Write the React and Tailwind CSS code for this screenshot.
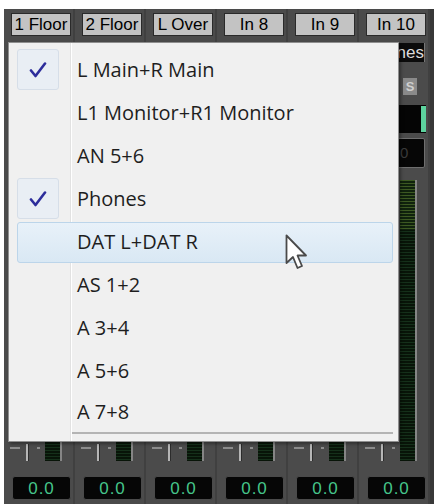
import React from 'react';

const strips = [
  { name: '1 Floor' },
  { name: '2 Floor' },
  { name: 'L Over' },
  { name: 'In 8' },
  { name: 'In 9' },
  { name: 'In 10', label: 'Phones', visible: true },
];

const outputs = [
  { name: 'L Main+R Main', checked: true },
  { name: 'L1 Monitor+R1 Monitor' },
  { name: 'AN 5+6' },
  { name: 'Phones', checked: true },
  { name: 'DAT L+DAT R', hover: true },
  { name: 'AS 1+2' },
  { name: 'A 3+4' },
  { name: 'A 5+6' },
  { name: 'A 7+8', last: true },
];

// the menu covers most of each strip, only the last one shows its upper controls
const Strip = ({ name, label, visible }) => {
  return (
    <div className="w-[71px] shrink-0 flex flex-col border-r-2 border-[#404040]">
      <div className="mt-[4px] ml-[7px] w-[60px] h-[23px] bg-[#c3c3c3] border border-[#2a2a2a] flex items-center justify-center whitespace-nowrap overflow-hidden text-[17px] leading-none text-black">
        {name}
      </div>
      <div className="mt-[7px] ml-[7px] w-[59px] h-[19px] bg-[#0b0b0b] border-r border-[#777] flex items-center justify-end overflow-hidden whitespace-nowrap text-[17px] leading-none text-[#dcdcdc]">
        {label}
      </div>
      <div className="mt-[16px] h-[17px] flex">
        <div className="ml-[10px] w-[14px] bg-[#8a8a8a]" />
        <div className="ml-[20px] w-[14px] bg-[#8a8a8a] text-[#cfcfcf] text-[13px] font-bold flex items-center justify-center">
          {visible ? 'S' : ''}
        </div>
      </div>
      <div className="mt-[10px] ml-[7px] w-[60px] h-[28px] bg-[#050505] flex justify-end">
        <div className="w-[5px] my-[1px] bg-[#5dd39e]" />
      </div>
      <div className="mt-[5px] ml-[7px] w-[59px] h-[30px] bg-[#060606] border border-[#6e6e6e] rounded-[2px] flex items-center pl-[33px] text-[15px] text-[#3a3a3a]">
        {visible ? '0' : ''}
      </div>
      <div className="mt-[12px] h-[281px] flex">
        <div className="w-[41px] flex flex-col justify-end">
          <div className="h-[17px] flex items-start">
            <div className="ml-[6px] mt-[3px] w-[10px] h-[2px] bg-[#8c8c8c]" />
            <div className="ml-[6px] w-[3px] h-[17px] bg-[#b5b5b5] border-r border-[#2c2c2c]" />
            <div className="ml-[8px] mt-[3px] w-[3px] h-[2px] bg-[#8c8c8c]" />
          </div>
        </div>
        <div className="w-[17px] h-full border-r-2 border-[#858585] bg-[image:repeating-linear-gradient(to_bottom,#15301a_0px,#15301a_1px,#081408_1px,#081408_3px)]">
          <div className="h-[50px] bg-[image:repeating-linear-gradient(to_bottom,#3d5a22_0px,#3d5a22_1px,#10220d_1px,#10220d_3px)]" />
        </div>
      </div>
      <div className="mt-[15px] ml-[8px] w-[59px] h-[24px] bg-[#060606] border border-[#4a4a4a] rounded-[3px] flex items-center justify-center text-[17px] leading-none tracking-[1px] text-[#45c48a]">
        0.0
      </div>
    </div>
  );
};

const Check = () => (
  <div className="absolute left-[8px] top-[1px] w-[42px] h-[41px] rounded-[3px] border border-[#d6dee8] bg-[#e9eef4] flex items-center justify-center">
    <svg width="18" height="16" viewBox="0 0 18 16">
      <path d="M2 8.5 L6.5 14 L16 1.5" fill="none" stroke="#2d2d9b" strokeWidth="2.6" strokeLinejoin="round" strokeLinecap="round" />
    </svg>
  </div>
);

const App = () => {
  return (
    <div className="relative w-[434px] h-[504px] bg-white pt-[9px] overflow-hidden" style={{ fontFamily: '"Liberation Sans", Arial, sans-serif' }}>
      <div className="ml-[4px] h-[495px] bg-[#4b4b4b] flex">
        {strips.map((s, idx) => (
          <Strip key={idx} name={s.name} label={s.label} visible={s.visible} />
        ))}
        <div className="flex-1 bg-[#383838]" />
      </div>

      {/* output routing menu */}
      <div
        className="absolute left-[8px] top-[42px] w-[391px] h-[400px] bg-[#f0f0f0] border border-[#8f8f8f] shadow-[2px_2px_3px_rgba(0,0,0,0.35)] pt-[5px] flex flex-col"
        style={{ fontFamily: '"Open Sans", "Noto Sans", sans-serif' }}
      >
        <div className="absolute left-[61px] top-0 bottom-0 w-[2px] border-l border-[#e2e2e2] bg-white" />
        {outputs.map((o, idx) => (
          <div key={idx} className={`relative flex items-center ${o.last ? 'h-[40px]' : 'h-[43px]'}`}>
            {o.hover && (
              <div className="absolute left-[8px] right-[5px] top-[2px] h-[41px] rounded-[3px] border border-[#bcd5ea] bg-[image:linear-gradient(to_bottom,#e8f1f9,#d9e8f4)]" />
            )}
            {o.checked && <Check />}
            <span className="relative pl-[68px] text-[20px] leading-none text-[#1e1e1e] whitespace-nowrap">{o.name}</span>
          </div>
        ))}
        <div className="ml-[63px] mr-[5px] h-[2px] bg-[#b4b4b4]" />
      </div>

      {/* mouse pointer */}
      <svg className="absolute left-[285px] top-[234px]" width="24" height="38" viewBox="0 0 24 38">
        <path d="M1.5 1.5 L1.5 29 L8 23 L12.5 34 L17 32 L12.5 21.5 L21 21.5 Z" fill="#ffffff" stroke="#4a4a4a" strokeWidth="1.8" strokeLinejoin="round" />
      </svg>
    </div>
  );
};

export default App;
